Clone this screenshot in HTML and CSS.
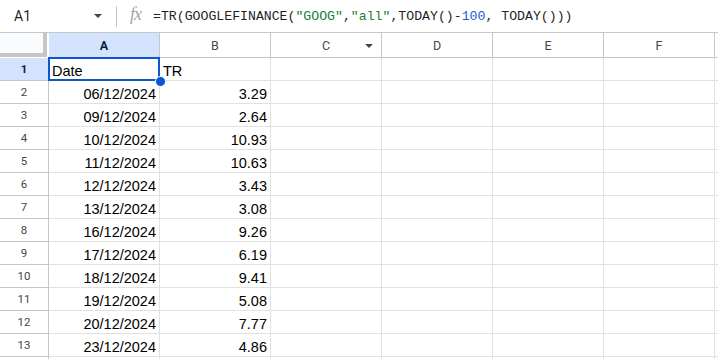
FILE: index.html
```html
<!DOCTYPE html>
<html>
<head>
<meta charset="utf-8">
<link rel="stylesheet" href="styles.css">
</head>
<body>
<div class="fbar">
  <div class="namebox">A1</div>
  <div class="namedrop"></div>
  <div class="sep"></div>
  <div class="fx">fx</div>
  <div class="formula">=TR(GOOGLEFINANCE(<span class="str">"GOOG"</span>,<span class="str">"all"</span>,TODAY()-<span class="num">100</span>, TODAY()))</div>
</div>
<div class="grid">
  <div class="corner"><div class="corner-in"></div></div>
  <div class="ch sel">A</div>
  <div class="ch">B</div>
  <div class="ch colc">C<span class="cdrop"></span></div>
  <div class="ch">D</div>
  <div class="ch">E</div>
  <div class="ch">F</div>
  <div class="ch last"></div>

  <div class="rh sel">1</div>
  <div class="c l active">Date<span class="handle"></span></div>
  <div class="c l">TR</div>
  <div class="c"></div><div class="c"></div><div class="c"></div><div class="c"></div><div class="c last"></div>

  <div class="rh">2</div><div class="c">06/12/2024</div><div class="c">3.29</div><div class="c"></div><div class="c"></div><div class="c"></div><div class="c"></div><div class="c last"></div>
  <div class="rh">3</div><div class="c">09/12/2024</div><div class="c">2.64</div><div class="c"></div><div class="c"></div><div class="c"></div><div class="c"></div><div class="c last"></div>
  <div class="rh">4</div><div class="c">10/12/2024</div><div class="c">10.93</div><div class="c"></div><div class="c"></div><div class="c"></div><div class="c"></div><div class="c last"></div>
  <div class="rh">5</div><div class="c">11/12/2024</div><div class="c">10.63</div><div class="c"></div><div class="c"></div><div class="c"></div><div class="c"></div><div class="c last"></div>
  <div class="rh">6</div><div class="c">12/12/2024</div><div class="c">3.43</div><div class="c"></div><div class="c"></div><div class="c"></div><div class="c"></div><div class="c last"></div>
  <div class="rh">7</div><div class="c">13/12/2024</div><div class="c">3.08</div><div class="c"></div><div class="c"></div><div class="c"></div><div class="c"></div><div class="c last"></div>
  <div class="rh">8</div><div class="c">16/12/2024</div><div class="c">9.26</div><div class="c"></div><div class="c"></div><div class="c"></div><div class="c"></div><div class="c last"></div>
  <div class="rh">9</div><div class="c">17/12/2024</div><div class="c">6.19</div><div class="c"></div><div class="c"></div><div class="c"></div><div class="c"></div><div class="c last"></div>
  <div class="rh">10</div><div class="c">18/12/2024</div><div class="c">9.41</div><div class="c"></div><div class="c"></div><div class="c"></div><div class="c"></div><div class="c last"></div>
  <div class="rh">11</div><div class="c">19/12/2024</div><div class="c">5.08</div><div class="c"></div><div class="c"></div><div class="c"></div><div class="c"></div><div class="c last"></div>
  <div class="rh">12</div><div class="c">20/12/2024</div><div class="c">7.77</div><div class="c"></div><div class="c"></div><div class="c"></div><div class="c"></div><div class="c last"></div>
  <div class="rh">13</div><div class="c">23/12/2024</div><div class="c">4.86</div><div class="c"></div><div class="c"></div><div class="c"></div><div class="c"></div><div class="c last"></div>
  <div class="rh"></div><div class="c"></div><div class="c"></div><div class="c"></div><div class="c"></div><div class="c"></div><div class="c"></div><div class="c last"></div>
</div>
</body>
</html>
```
FILE: styles.css
```css
html, body {
  margin: 0;
  padding: 0;
  background: #fff;
  overflow: hidden;
  width: 718px;
  height: 359px;
}
body {
  font-family: "Liberation Sans", Arial, sans-serif;
  color: #000;
}
.fbar {
  height: 32px;
  border-bottom: 1px solid #c7c7c7;
  display: flex;
  align-items: center;
  color: #1f1f1f;
}
.namebox {
  font-family: Roboto, "Liberation Sans", sans-serif;
  font-size: 14px;
  padding-left: 14px;
  width: 80px;
  box-sizing: border-box;
}
.namedrop {
  width: 0;
  height: 0;
  border-left: 4px solid transparent;
  border-right: 4px solid transparent;
  border-top: 4px solid #444746;
  margin-left: 14px;
}
.sep {
  width: 1px;
  height: 21px;
  background: #c7c7c7;
  margin-left: 14px;
}
.fx {
  font-family: "Liberation Serif", serif;
  font-style: italic;
  font-size: 18px;
  color: #a5a5a5;
  margin-left: 13px;
  letter-spacing: -1px;
  margin-top: -3px;
}
.formula {
  font-family: "Liberation Mono", "DejaVu Sans Mono", monospace;
  font-size: 13.2px;
  margin-left: 12px;
  color: #1f1f1f;
}
.str { color: #188038; }
.num { color: #1a5fd0; }

.grid {
  display: grid;
  grid-template-columns: 49px 111px 111px 111px 111px 111px 111px 20px;
  grid-template-rows: 25px repeat(14, 23px);
}
.grid > div {
  box-sizing: border-box;
  border-right: 1px solid #e1e1e1;
  border-bottom: 1px solid #e1e1e1;
}
.corner {
  background: #fff;
  position: relative;
  border-right-color: #fff !important;
  border-bottom-color: #fff !important;
}
.corner-in {
  position: absolute;
  left: 0;
  top: 0;
  width: 47px;
  height: 24px;
  box-sizing: border-box;
  border-right: 4px solid #c4c7c5;
  border-bottom: 4px solid #c4c7c5;
  background: #f9fbfd;
}
.ch {
  display: flex;
  align-items: center;
  justify-content: center;
  font-family: Roboto, "Liberation Sans", sans-serif;
  font-size: 12.5px;
  color: #444746;
  border-right-color: #c4c7c5 !important;
  border-bottom-color: #c4c7c5 !important;
  background: #fff;
  padding-top: 1px;
}
.ch.sel {
  background: #d3e3fd;
  color: #0b1e44;
  font-weight: bold;
}
.colc { position: relative; }
.cdrop {
  position: absolute;
  right: 8px;
  top: 11px;
  width: 0;
  height: 0;
  border-left: 4px solid transparent;
  border-right: 4px solid transparent;
  border-top: 4px solid #444746;
}
.rh {
  display: flex;
  align-items: center;
  justify-content: center;
  font-family: Roboto, "Liberation Sans", sans-serif;
  font-size: 11.5px;
  color: #444746;
  border-right-color: #c4c7c5 !important;
  border-bottom-color: #c4c7c5 !important;
  background: #fff;
}
.rh.sel {
  background: #d3e3fd;
  color: #0b1e44;
  font-weight: bold;
}
.c {
  display: flex;
  align-items: flex-end;
  justify-content: flex-end;
  font-size: 14.5px;
  line-height: 17px;
  padding-right: 3px;
  white-space: nowrap;
}
.c.l {
  justify-content: flex-start;
  padding-left: 3px;
}
.c.last { padding: 0; }
.active {
  position: relative;
  box-shadow: inset 0 0 0 2px #0b57d0;
  margin: -1px 0 0 -1px;
  border: 0 !important;
  width: 112px;
  height: 24px;
  padding-left: 4px !important;
  padding-bottom: 1px;
}
.handle {
  position: absolute;
  right: -6px;
  bottom: -6px;
  width: 11px;
  height: 11px;
  border-radius: 50%;
  background: #0b57d0;
  box-sizing: border-box;
  border: 1px solid #fff;
  z-index: 2;
}
```
